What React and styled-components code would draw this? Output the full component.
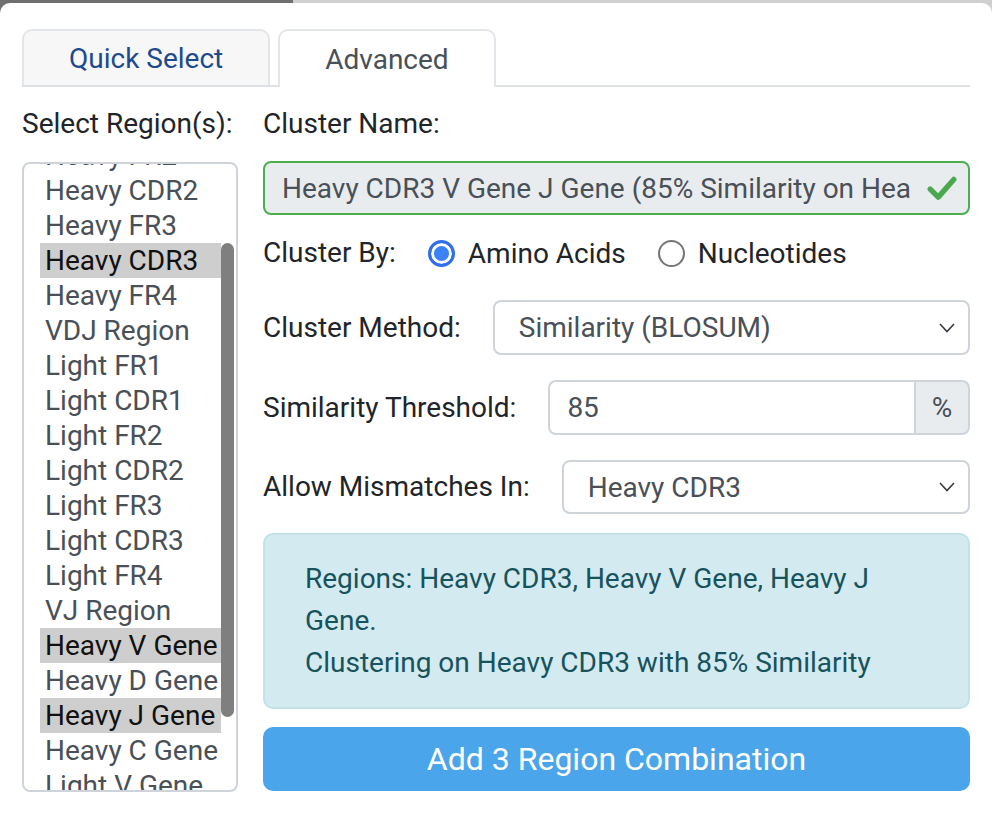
import React, { useLayoutEffect, useRef } from "react";
import styled, { createGlobalStyle } from "styled-components";

const GlobalStyle = createGlobalStyle`
  html, body {
    margin: 0;
    padding: 0;
    background: #fff;
  }
  body {
    font-family: Roboto, "Liberation Sans", Arial, sans-serif;
    color: #212529;
  }
  * {
    box-sizing: border-box;
  }
`;

const REGIONS = [
  "Heavy FR1",
  "Heavy CDR1",
  "Heavy FR2",
  "Heavy CDR2",
  "Heavy FR3",
  "Heavy CDR3",
  "Heavy FR4",
  "VDJ Region",
  "Light FR1",
  "Light CDR1",
  "Light FR2",
  "Light CDR2",
  "Light FR3",
  "Light CDR3",
  "Light FR4",
  "VJ Region",
  "Heavy V Gene",
  "Heavy D Gene",
  "Heavy J Gene",
  "Heavy C Gene",
  "Light V Gene",
  "Light J Gene",
  "Light C Gene",
];

const SELECTED = ["Heavy CDR3", "Heavy V Gene", "Heavy J Gene"];

function Chevron() {
  return (
    <svg width="18" height="12" viewBox="0 0 18 12">
      <polyline
        points="2,2 9,9.5 16,2"
        fill="none"
        stroke="#343a40"
        strokeWidth="1.6"
      />
    </svg>
  );
}

function Check() {
  return (
    <svg width="30" height="26" viewBox="0 0 28 24">
      <path
        d="M3 13 L10.5 20.5 L25 4"
        fill="none"
        stroke="#4aa84f"
        strokeWidth="5"
        strokeLinecap="round"
        strokeLinejoin="round"
      />
    </svg>
  );
}

function RegionList() {
  const ref = useRef(null);

  useLayoutEffect(() => {
    if (ref.current) ref.current.scrollTop = 100;
  }, []);

  return (
    <ListFrame>
      <ListScroll ref={ref}>
        {REGIONS.map((r) => (
          <Option key={r} selected={SELECTED.includes(r)}>
            {r}
          </Option>
        ))}
      </ListScroll>
      <Thumb />
    </ListFrame>
  );
}

function App() {
  return (
    <>
      <GlobalStyle />
      <Page>
        <Card>
          <Tabs>
            <Tab>Quick Select</Tab>
            <Tab active>Advanced</Tab>
          </Tabs>
          <Body>
            <LeftCol>
              <Label>Select Region(s):</Label>
              <RegionList />
            </LeftCol>
            <RightCol>
              <Label>Cluster Name:</Label>
              <NameWrap>
                <NameInput
                  readOnly
                  value="Heavy CDR3 V Gene J Gene (85% Similarity on Heavy CDR3)"
                />
                <CheckMark>
                  <Check />
                </CheckMark>
              </NameWrap>

              <RadioRow>
                <Label>Cluster By:</Label>
                <RadioOption>
                  <Radio checked />
                  Amino Acids
                </RadioOption>
                <RadioOption>
                  <Radio />
                  Nucleotides
                </RadioOption>
              </RadioRow>

              <FormRow first>
                <Label>Cluster Method:</Label>
                <Select>
                  <span>Similarity (BLOSUM)</span>
                  <Chevron />
                </Select>
              </FormRow>

              <FormRow>
                <Label>Similarity Threshold:</Label>
                <InputGroup>
                  <NumberInput readOnly value="85" />
                  <Addon>%</Addon>
                </InputGroup>
              </FormRow>

              <FormRow>
                <Label>Allow Mismatches In:</Label>
                <Select short>
                  <span>Heavy CDR3</span>
                  <Chevron />
                </Select>
              </FormRow>

              <InfoBox>
                Regions: Heavy CDR3, Heavy V Gene, Heavy J Gene.
                <br />
                Clustering on Heavy CDR3 with 85% Similarity
              </InfoBox>

              <AddButton>Add 3 Region Combination</AddButton>
            </RightCol>
          </Body>
        </Card>
      </Page>
    </>
  );
}

export default App;

const Page = styled.div`
  width: 992px;
  height: 814px;
  overflow: hidden;
  background:
    linear-gradient(to right, #6f6f6f 0 293px, #d0d0d0 293px) top / 100% 14px
      no-repeat,
    #ffffff;
`;

const Card = styled.div`
  margin-top: 3px;
  height: 809px;
  background: #fff;
  border-radius: 10px;
  padding: 26px 22px 0;
`;

const Tabs = styled.div`
  display: flex;
  gap: 8px;
  border-bottom: 2px solid #dee2e6;
`;

const Tab = styled.div`
  padding: 0 45px;
  display: flex;
  align-items: center;
  font-size: 28px;
  border: 2px solid #e2e5e9;
  border-bottom: none;
  border-radius: 10px 10px 0 0;
  margin-bottom: ${(p) => (p.active ? "-2px" : "0")};
  height: ${(p) => (p.active ? "58px" : "56px")};
  background: ${(p) => (p.active ? "#fff" : "#f7f7f7")};
  color: ${(p) => (p.active ? "#495057" : "#1d4a8c")};
`;

const Body = styled.div`
  display: flex;
  gap: 25px;
  margin-top: 22px;
`;

const LeftCol = styled.div`
  flex: 0 0 216px;
  display: flex;
  flex-direction: column;
  gap: 23px;
`;

const RightCol = styled.div`
  flex: 1;
  min-width: 0;
  display: flex;
  flex-direction: column;
`;

const Label = styled.div`
  font-size: 28px;
  line-height: 30px;
  color: #212529;
  white-space: nowrap;
`;

const ListFrame = styled.div`
  position: relative;
  height: 630px;
  border: 2px solid #ced4da;
  border-radius: 8px;
  overflow: hidden;
`;

const ListScroll = styled.div`
  height: 100%;
  overflow-y: scroll;
  padding: 4px 15px 4px 16px;
  scrollbar-width: none;
  &::-webkit-scrollbar {
    display: none;
  }
`;

const Option = styled.div`
  height: 35px;
  line-height: 35px;
  padding-left: 5px;
  font-size: 28px;
  white-space: nowrap;
  overflow: hidden;
  color: ${(p) => (p.selected ? "#111" : "#495057")};
  background: ${(p) => (p.selected ? "#cecece" : "transparent")};
`;

const Thumb = styled.div`
  position: absolute;
  right: 2px;
  top: 79px;
  width: 13px;
  height: 474px;
  border-radius: 7px;
  background: #7f7f7f;
`;

const NameWrap = styled.div`
  position: relative;
  margin-top: 22px;
`;

const NameInput = styled.input`
  display: block;
  width: 100%;
  min-width: 0;
  height: 54px;
  border: 2px solid #4cae4f;
  border-radius: 8px;
  background: #e9ecef;
  padding: 0 58px 0 17px;
  font-family: inherit;
  font-size: 28px;
  color: #495057;
  outline: none;
`;

const CheckMark = styled.span`
  position: absolute;
  right: 13px;
  top: 14px;
  display: flex;
`;

const RadioRow = styled.div`
  display: flex;
  align-items: center;
  gap: 32px;
  margin-top: 23px;
  height: 30px;
`;

const RadioOption = styled.div`
  display: flex;
  align-items: center;
  gap: 13px;
  font-size: 28px;
  color: #212529;
`;

const Radio = styled.span`
  width: 27px;
  height: 27px;
  border-radius: 50%;
  border: ${(p) => (p.checked ? "3px solid #2f6fec" : "2px solid #767676")};
  background: ${(p) => (p.checked ? "#3b82f6" : "#fff")};
  box-shadow: ${(p) => (p.checked ? "inset 0 0 0 3px #fff" : "none")};
`;

const FormRow = styled.div`
  display: flex;
  align-items: center;
  gap: 32px;
  margin-top: ${(p) => (p.first ? "32px" : "25px")};
`;

const Select = styled.div`
  flex: 1;
  min-width: 0;
  height: ${(p) => (p.short ? "54px" : "55px")};
  display: flex;
  align-items: center;
  justify-content: space-between;
  border: 2px solid #ced4da;
  border-radius: 8px;
  padding: 0 12px 0 24px;
  font-size: 28px;
  color: #495057;
  background: #fff;
`;

const InputGroup = styled.div`
  flex: 1;
  min-width: 0;
  display: flex;
  height: 55px;
`;

const NumberInput = styled.input`
  flex: 1;
  min-width: 0;
  width: 0;
  height: 100%;
  border: 2px solid #ced4da;
  border-right: none;
  border-radius: 8px 0 0 8px;
  padding: 0 17px;
  font-family: inherit;
  font-size: 28px;
  color: #495057;
  outline: none;
`;

const Addon = styled.div`
  width: 56px;
  display: flex;
  align-items: center;
  justify-content: center;
  border: 2px solid #ced4da;
  border-radius: 0 8px 8px 0;
  background: #e9ecef;
  font-size: 28px;
  color: #495057;
`;

const InfoBox = styled.div`
  margin-top: 19px;
  height: 176px;
  border: 2px solid #c3e2e8;
  border-radius: 10px;
  background: #d3eaf0;
  padding: 23px 40px;
  font-size: 28px;
  line-height: 42px;
  color: #17535c;
`;

const AddButton = styled.button`
  margin-top: 18px;
  height: 64px;
  border: none;
  border-radius: 10px;
  background: #4ba5ea;
  color: #fff;
  font-family: inherit;
  font-size: 32px;
`;
